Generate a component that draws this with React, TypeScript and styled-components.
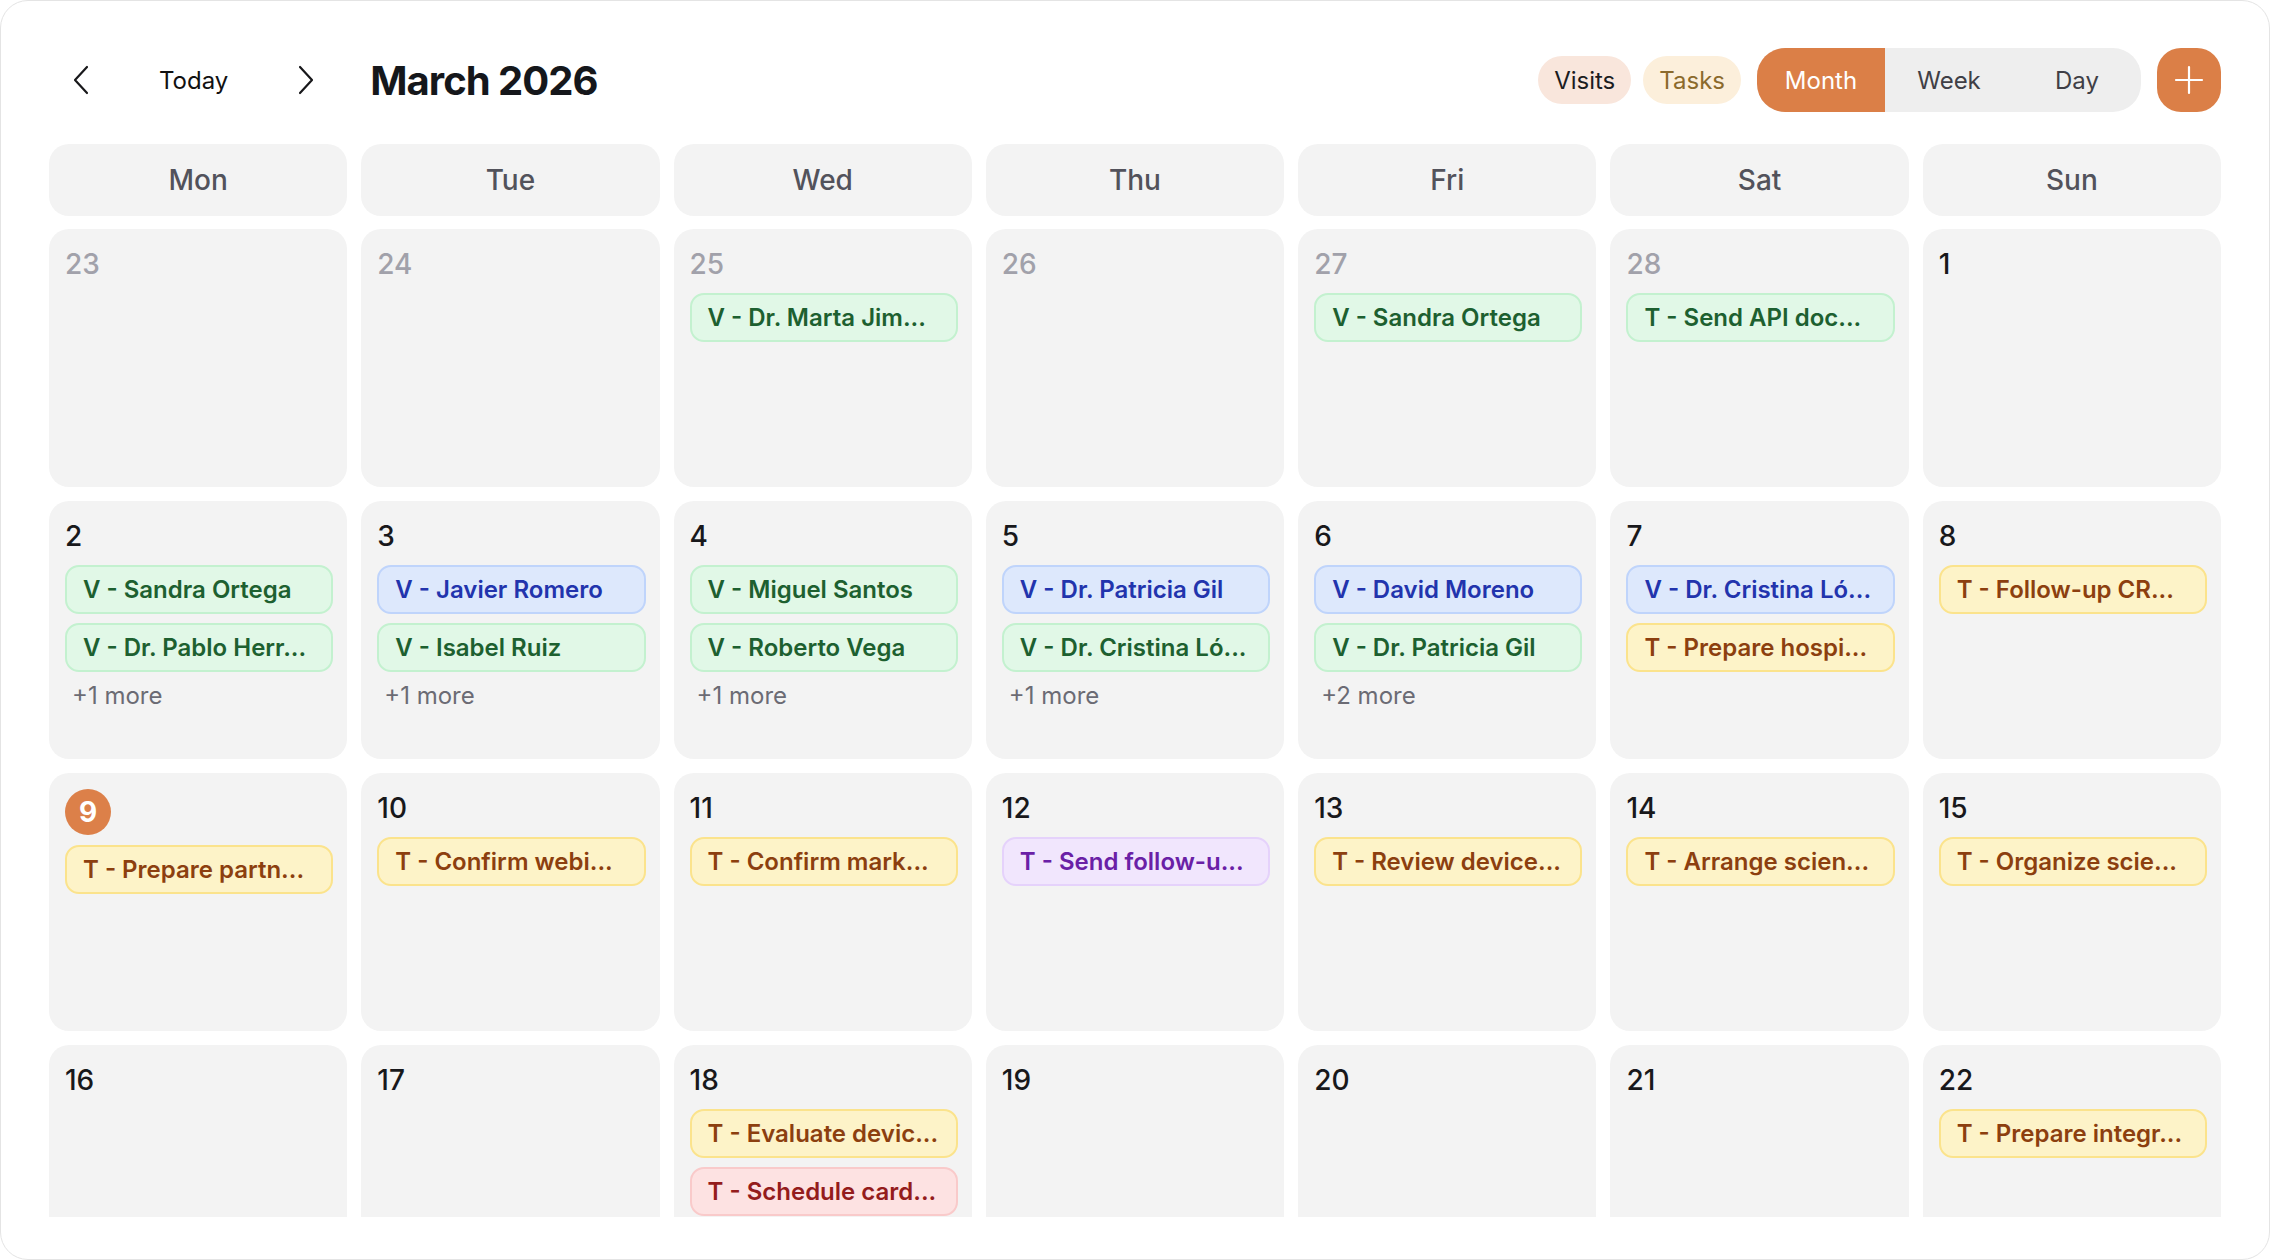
import React from "react";
import styled, { createGlobalStyle, css } from "styled-components";

const GlobalStyle = createGlobalStyle`
  html, body {
    margin: 0;
    padding: 0;
    background: #ffffff;
    font-family: Inter, "Noto Sans", "Liberation Sans", sans-serif;
  }
  * {
    box-sizing: border-box;
  }
`;

type Tone = "green" | "blue" | "yellow" | "red" | "purple";

const tones: Record<Tone, { bg: string; border: string; text: string }> = {
  green: { bg: "#e1f8e7", border: "#c3f1cf", text: "#1d6030" },
  blue: { bg: "#dde8fc", border: "#bfd4fb", text: "#2234ad" },
  yellow: { bg: "#fdf3c8", border: "#fbe38c", text: "#8c3f0f" },
  red: { bg: "#fde2e2", border: "#f9caca", text: "#941c1c" },
  purple: { bg: "#f1e6fd", border: "#e5d2fb", text: "#6a20a6" },
};

interface CalEvent {
  label: string;
  tone: Tone;
}

interface Day {
  num: number;
  muted?: boolean;
  today?: boolean;
  events?: CalEvent[];
  more?: number;
}

const weeks: Day[][] = [
  [
    { num: 23, muted: true },
    { num: 24, muted: true },
    { num: 25, muted: true, events: [{ label: "V - Dr. Marta Jim...", tone: "green" }] },
    { num: 26, muted: true },
    { num: 27, muted: true, events: [{ label: "V - Sandra Ortega", tone: "green" }] },
    { num: 28, muted: true, events: [{ label: "T - Send API doc...", tone: "green" }] },
    { num: 1 },
  ],
  [
    {
      num: 2,
      events: [
        { label: "V - Sandra Ortega", tone: "green" },
        { label: "V - Dr. Pablo Herr...", tone: "green" },
      ],
      more: 1,
    },
    {
      num: 3,
      events: [
        { label: "V - Javier Romero", tone: "blue" },
        { label: "V - Isabel Ruiz", tone: "green" },
      ],
      more: 1,
    },
    {
      num: 4,
      events: [
        { label: "V - Miguel Santos", tone: "green" },
        { label: "V - Roberto Vega", tone: "green" },
      ],
      more: 1,
    },
    {
      num: 5,
      events: [
        { label: "V - Dr. Patricia Gil", tone: "blue" },
        { label: "V - Dr. Cristina Ló...", tone: "green" },
      ],
      more: 1,
    },
    {
      num: 6,
      events: [
        { label: "V - David Moreno", tone: "blue" },
        { label: "V - Dr. Patricia Gil", tone: "green" },
      ],
      more: 2,
    },
    {
      num: 7,
      events: [
        { label: "V - Dr. Cristina Ló...", tone: "blue" },
        { label: "T - Prepare hospi...", tone: "yellow" },
      ],
    },
    { num: 8, events: [{ label: "T - Follow-up CR...", tone: "yellow" }] },
  ],
  [
    { num: 9, today: true, events: [{ label: "T - Prepare partn...", tone: "yellow" }] },
    { num: 10, events: [{ label: "T - Confirm webi...", tone: "yellow" }] },
    { num: 11, events: [{ label: "T - Confirm mark...", tone: "yellow" }] },
    { num: 12, events: [{ label: "T - Send follow-u...", tone: "purple" }] },
    { num: 13, events: [{ label: "T - Review device...", tone: "yellow" }] },
    { num: 14, events: [{ label: "T - Arrange scien...", tone: "yellow" }] },
    { num: 15, events: [{ label: "T - Organize scie...", tone: "yellow" }] },
  ],
  [
    { num: 16 },
    { num: 17 },
    {
      num: 18,
      events: [
        { label: "T - Evaluate devic...", tone: "yellow" },
        { label: "T - Schedule card...", tone: "red" },
      ],
    },
    { num: 19 },
    { num: 20 },
    { num: 21 },
    { num: 22, events: [{ label: "T - Prepare integr...", tone: "yellow" }] },
  ],
];

const weekDays = ["Mon", "Tue", "Wed", "Thu", "Fri", "Sat", "Sun"];

const Card = styled.div`
  height: 100vh;
  display: flex;
  flex-direction: column;
  padding: 47px 48px 42px;
  background: #ffffff;
  border: 1px solid #e4e4e4;
  border-radius: 28px;
  overflow: hidden;
`;

const Toolbar = styled.div`
  display: flex;
  align-items: center;
  justify-content: space-between;
  height: 64px;
  margin-bottom: 32px;
  flex-shrink: 0;
`;

const NavGroup = styled.div`
  display: flex;
  align-items: center;
  gap: 30px;
`;

const IconButton = styled.button`
  width: 64px;
  height: 64px;
  padding: 0;
  border: none;
  background: transparent;
  display: flex;
  align-items: center;
  justify-content: center;
  color: #18181b;
  cursor: pointer;
`;

const TodayButton = styled.button`
  height: 64px;
  padding: 0 16px;
  border: none;
  background: transparent;
  font-family: inherit;
  font-size: 24px;
  color: #111111;
  cursor: pointer;
`;

const Title = styled.h1`
  margin: 0 0 0 2px;
  font-size: 40px;
  font-weight: 700;
  letter-spacing: -1px;
  color: #15171b;
`;

const Actions = styled.div`
  display: flex;
  align-items: center;
  gap: 16px;
`;

const Filters = styled.div`
  display: flex;
  gap: 12px;
`;

const FilterPill = styled.button<{ $bg: string; $fg: string }>`
  height: 48px;
  padding: 0 16px;
  border: none;
  border-radius: 24px;
  background: ${(p) => p.$bg};
  color: ${(p) => p.$fg};
  font-family: inherit;
  font-size: 24px;
  cursor: pointer;
`;

const Segmented = styled.div`
  display: flex;
  height: 64px;
  border-radius: 28px;
  background: #eeeeee;
  overflow: hidden;
`;

const Segment = styled.button<{ $active?: boolean }>`
  width: 128px;
  height: 100%;
  border: none;
  font-family: inherit;
  font-size: 24px;
  cursor: pointer;
  background: ${(p) => (p.$active ? "#db7f47" : "transparent")};
  color: ${(p) => (p.$active ? "#ffffff" : "#3f3f46")};
`;

const AddButton = styled.button`
  width: 64px;
  height: 64px;
  border: none;
  border-radius: 24px;
  background: #db7f47;
  display: flex;
  align-items: center;
  justify-content: center;
  cursor: pointer;
`;

const WeekHeader = styled.div`
  display: grid;
  grid-template-columns: repeat(7, 1fr);
  gap: 14px;
  margin-bottom: 13px;
  flex-shrink: 0;
`;

const HeaderCell = styled.div`
  height: 72px;
  border-radius: 20px;
  background: #f3f3f3;
  display: flex;
  align-items: center;
  justify-content: center;
  font-size: 28px;
  font-weight: 500;
  color: #52525b;
`;

const MonthGrid = styled.div`
  flex: 1;
  min-height: 0;
  overflow: hidden;
  display: grid;
  grid-template-columns: repeat(7, 1fr);
  grid-auto-rows: 258px;
  gap: 14px;
`;

const DayCell = styled.div`
  min-width: 0;
  border-radius: 20px;
  background: #f3f3f3;
  padding: 16px 14px 16px 16px;
  display: flex;
  flex-direction: column;
  gap: 9px;
`;

const DayNumber = styled.div<{ $muted?: boolean; $today?: boolean }>`
  font-size: 28px;
  font-weight: 500;
  line-height: 38px;
  margin-bottom: 1px;
  color: ${(p) => (p.$muted ? "#a1a1aa" : "#18181b")};
  ${(p) =>
    p.$today &&
    css`
      width: 46px;
      height: 46px;
      line-height: 46px;
      border-radius: 50%;
      background: #dc8049;
      color: #ffffff;
      font-weight: 700;
      text-align: center;
    `}
`;

const EventChip = styled.div<{ $tone: Tone }>`
  height: 49px;
  padding: 0 12px 0 16px;
  border-radius: 14px;
  border: 2px solid ${(p) => tones[p.$tone].border};
  background: ${(p) => tones[p.$tone].bg};
  color: ${(p) => tones[p.$tone].text};
  font-size: 24px;
  font-weight: 600;
  line-height: 45px;
  white-space: nowrap;
  overflow: hidden;
  text-overflow: ellipsis;
`;

const MoreLink = styled.div`
  padding-left: 7px;
  font-size: 24px;
  line-height: 30px;
  color: #6b6b74;
`;

const Chevron = ({ dir }: { dir: "left" | "right" }) => (
  <svg width="18" height="30" viewBox="0 0 18 30" fill="none">
    <polyline
      points={dir === "left" ? "15,2 3,15 15,28" : "3,2 15,15 3,28"}
      stroke="currentColor"
      strokeWidth="2.2"
      strokeLinecap="round"
      strokeLinejoin="round"
    />
  </svg>
);

const PlusIcon = () => (
  <svg width="30" height="30" viewBox="0 0 30 30" fill="none">
    <path d="M15 2v26M2 15h26" stroke="#ffffff" strokeWidth="2.2" strokeLinecap="round" />
  </svg>
);

const App = () => {
  return (
    <>
      <GlobalStyle />
      <Card>
        <Toolbar>
          <NavGroup>
            <IconButton aria-label="Previous month">
              <Chevron dir="left" />
            </IconButton>
            <TodayButton>Today</TodayButton>
            <IconButton aria-label="Next month">
              <Chevron dir="right" />
            </IconButton>
            <Title>March 2026</Title>
          </NavGroup>
          <Actions>
            <Filters>
              <FilterPill $bg="#f9e6dc" $fg="#1c1c1f">
                Visits
              </FilterPill>
              <FilterPill $bg="#fcefdb" $fg="#8b6a2c">
                Tasks
              </FilterPill>
            </Filters>
            <Segmented>
              <Segment $active>Month</Segment>
              <Segment>Week</Segment>
              <Segment>Day</Segment>
            </Segmented>
            <AddButton aria-label="Add">
              <PlusIcon />
            </AddButton>
          </Actions>
        </Toolbar>

        <WeekHeader>
          {weekDays.map((d) => (
            <HeaderCell key={d}>{d}</HeaderCell>
          ))}
        </WeekHeader>

        <MonthGrid>
          {weeks.flat().map((day, i) => (
            <DayCell key={i}>
              <DayNumber $muted={day.muted} $today={day.today}>
                {day.num}
              </DayNumber>
              {day.events?.map((ev, j) => (
                <EventChip key={j} $tone={ev.tone}>
                  {ev.label}
                </EventChip>
              ))}
              {day.more && <MoreLink>+{day.more} more</MoreLink>}
            </DayCell>
          ))}
        </MonthGrid>
      </Card>
    </>
  );
};

export default App;
